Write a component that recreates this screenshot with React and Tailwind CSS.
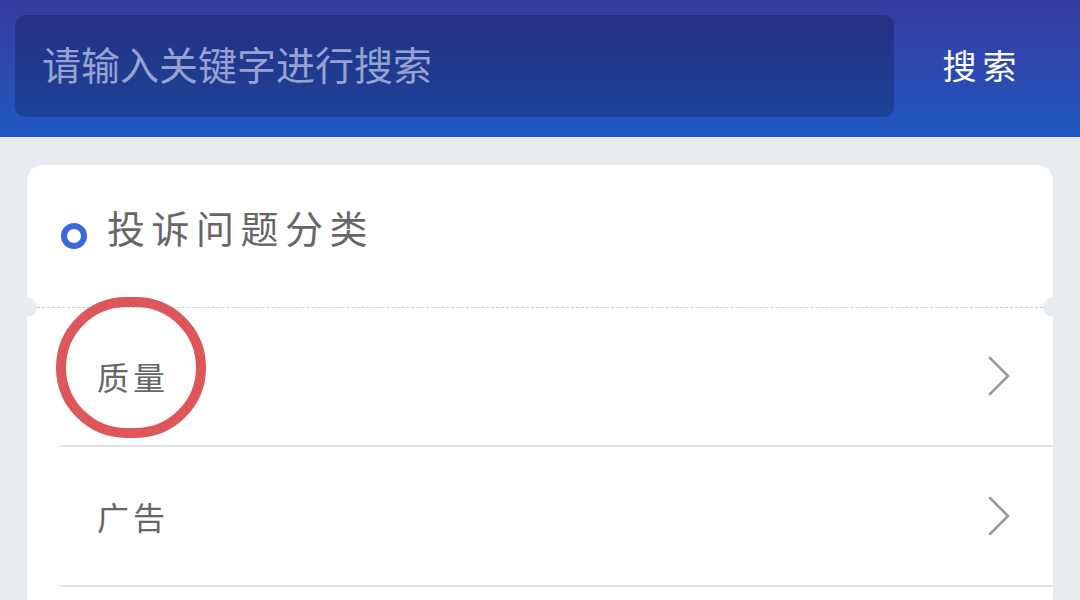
import React from "react";

const categories = ["质量", "广告"];

function Chevron() {
  return (
    <svg width="24" height="40" viewBox="0 0 24 40" fill="none">
      <polyline
        points="3,2 21,20 3,38"
        stroke="#9a9a9a"
        strokeWidth="2.6"
        strokeLinecap="round"
        strokeLinejoin="miter"
      />
    </svg>
  );
}

export default function App() {
  return (
    <div
      className="w-[1080px] h-[600px] overflow-hidden bg-[#e8ecf1]"
      style={{ fontFamily: '"Noto Sans CJK SC", "Noto Sans", sans-serif' }}
    >
      {/* header with search */}
      <div className="h-[137px] flex items-start px-[15px] pt-[15px] bg-gradient-to-b from-[#343b9d] to-[#1e58c2]">
        <div className="flex-1 h-[102px] rounded-[10px] bg-gradient-to-b from-[#243184] to-[#1c4298] flex items-center pl-[27px] pb-[6px]">
          <span className="text-[39px] leading-none text-[#95a2d2]">请输入关键字进行搜索</span>
        </div>
        <button className="w-[171px] h-[102px] flex items-center justify-center text-white text-[34px] tracking-[6px] pl-[6px] pb-[4px]">
          搜索
        </button>
      </div>

      {/* card */}
      <div className="pt-[28px] px-[27px]">
        <div className="relative bg-white rounded-t-[16px] h-[500px]">
          <div className="h-[142px] flex items-center pl-[34px] pb-[18px]">
            <span className="w-[26px] h-[26px] rounded-full border-[6px] border-[#3a68dc] mt-[18px]" />
            <span className="ml-[20px] text-[38px] leading-none tracking-[6.5px] text-[#666666]">
              投诉问题分类
            </span>
          </div>

          {/* dashed divider with notches */}
          <div className="relative h-0">
            <div className="mx-[10px] border-t border-dashed border-[#c3d0da]" />
            <span className="absolute -left-[10px] -top-[10px] w-[20px] h-[20px] rounded-full bg-[#e8ecf1]" />
            <span className="absolute -right-[10px] -top-[10px] w-[20px] h-[20px] rounded-full bg-[#e8ecf1]" />
          </div>

          <div className="ml-[33px]">
            {categories.map((c) => (
              <div
                key={c}
                className="h-[140px] flex items-center justify-between pl-[37px] pr-[42px] border-b-2 border-[#e2e2e2]"
              >
                <span className="text-[32px] leading-none tracking-[4px] text-[#666666]">{c}</span>
                <Chevron />
              </div>
            ))}
          </div>

          {/* annotation circle */}
          <div className="absolute left-[29px] top-[132px] w-[150px] h-[141px] rounded-full border-[10px] border-[#dc565a]" />
        </div>
      </div>
    </div>
  );
}
